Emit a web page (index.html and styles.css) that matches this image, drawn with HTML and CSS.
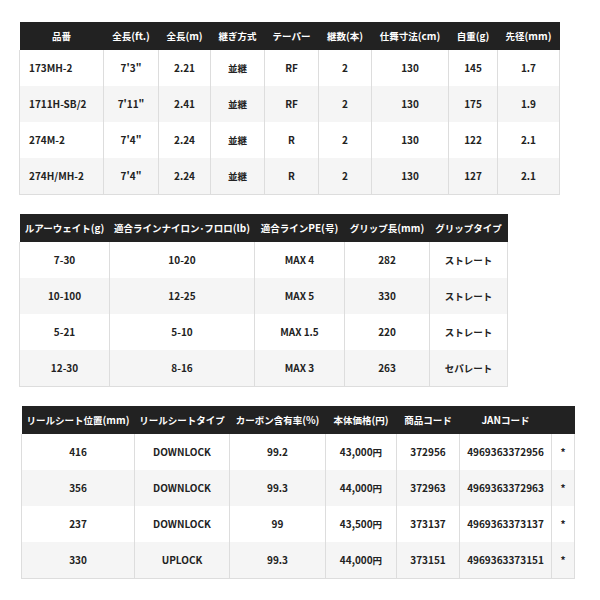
FILE: index.html
```html
<!DOCTYPE html>
<html lang="ja">
<head>
<meta charset="utf-8">
<link rel="stylesheet" href="styles.css">
</head>
<body>
<div class="page">
  <table class="spec t1">
    <colgroup>
      <col style="width:84px"><col style="width:55px"><col style="width:52px"><col style="width:54px"><col style="width:54px"><col style="width:53px"><col style="width:77px"><col style="width:49px"><col style="width:62px">
    </colgroup>
    <thead>
      <tr><th><span class="ja">品番</span></th><th><span class="ja">全長</span>(ft.)</th><th><span class="ja">全長</span>(m)</th><th><span class="ja">継ぎ方式</span></th><th><span class="ja">テーパー</span></th><th><span class="ja">継数</span>(<span class="ja">本</span>)</th><th><span class="ja">仕舞寸法</span>(cm)</th><th><span class="ja">自重</span>(g)</th><th><span class="ja">先径</span>(mm)</th></tr>
    </thead>
    <tbody>
      <tr><td class="left">173MH-2</td><td>7'3"</td><td>2.21</td><td><span class="ja">並継</span></td><td>RF</td><td>2</td><td>130</td><td>145</td><td>1.7</td></tr>
      <tr><td class="left">1711H-SB/2</td><td>7'11"</td><td>2.41</td><td><span class="ja">並継</span></td><td>RF</td><td>2</td><td>130</td><td>175</td><td>1.9</td></tr>
      <tr><td class="left">274M-2</td><td>7'4"</td><td>2.24</td><td><span class="ja">並継</span></td><td>R</td><td>2</td><td>130</td><td>122</td><td>2.1</td></tr>
      <tr><td class="left">274H/MH-2</td><td>7'4"</td><td>2.24</td><td><span class="ja">並継</span></td><td>R</td><td>2</td><td>130</td><td>127</td><td>2.1</td></tr>
    </tbody>
  </table>

  <table class="spec t2">
    <colgroup>
      <col style="width:90px"><col style="width:145px"><col style="width:90px"><col style="width:85px"><col style="width:78px">
    </colgroup>
    <thead>
      <tr><th><span class="ja">ルアーウェイト</span>(g)</th><th><span class="ja">適合ラインナイロン･フロロ</span>(lb)</th><th><span class="ja">適合ライン</span>PE(<span class="ja">号</span>)</th><th><span class="ja">グリップ長</span>(mm)</th><th><span class="ja">グリップタイプ</span></th></tr>
    </thead>
    <tbody>
      <tr><td>7-30</td><td>10-20</td><td>MAX 4</td><td>282</td><td><span class="ja">ストレート</span></td></tr>
      <tr><td>10-100</td><td>12-25</td><td>MAX 5</td><td>330</td><td><span class="ja">ストレート</span></td></tr>
      <tr><td>5-21</td><td>5-10</td><td>MAX 1.5</td><td>220</td><td><span class="ja">ストレート</span></td></tr>
      <tr><td>12-30</td><td>8-16</td><td>MAX 3</td><td>263</td><td><span class="ja">セパレート</span></td></tr>
    </tbody>
  </table>

  <table class="spec t3">
    <colgroup>
      <col style="width:113px"><col style="width:95px"><col style="width:96px"><col style="width:71px"><col style="width:63px"><col style="width:92px"><col style="width:23px">
    </colgroup>
    <thead>
      <tr><th><span class="ja">リールシート位置</span>(mm)</th><th><span class="ja">リールシートタイプ</span></th><th><span class="ja">カーボン含有率</span>(%)</th><th><span class="ja">本体価格</span>(<span class="ja">円</span>)</th><th><span class="ja">商品コード</span></th><th>JAN<span class="ja">コード</span></th><th></th></tr>
    </thead>
    <tbody>
      <tr><td>416</td><td>DOWNLOCK</td><td>99.2</td><td>43,000<span class="ja">円</span></td><td>372956</td><td>4969363372956</td><td class="star">*</td></tr>
      <tr><td>356</td><td>DOWNLOCK</td><td>99.3</td><td>44,000<span class="ja">円</span></td><td>372963</td><td>4969363372963</td><td class="star">*</td></tr>
      <tr><td>237</td><td>DOWNLOCK</td><td>99</td><td>43,500<span class="ja">円</span></td><td>373137</td><td>4969363373137</td><td class="star">*</td></tr>
      <tr><td>330</td><td>UPLOCK</td><td>99.3</td><td>44,000<span class="ja">円</span></td><td>373151</td><td>4969363373151</td><td class="star">*</td></tr>
    </tbody>
  </table>
</div>
</body>
</html>
```

FILE: styles.css
```css
html, body {
  margin: 0;
  padding: 0;
  background: #ffffff;
}

.page {
  display: flex;
  flex-direction: column;
  align-items: flex-start;
  gap: 19px;
  padding: 22px 0 0 19px;
  font-family: "Noto Sans CJK JP", "Noto Sans", sans-serif;
  font-weight: 700;
  font-size: 10px;
  color: #222222;
}

.ja {
  font-size: 9.5px;
}

.spec {
  border-collapse: collapse;
  table-layout: fixed;
  border-bottom: 1px solid #dddddd;
}

.t1 { width: 540px; }
.t2 { width: 488px; }
.t3 { width: 553px; margin-left: 2px; }

.spec th {
  background: #222222;
  color: #ffffff;
  height: 28px;
  padding: 0;
  font-weight: 700;
  text-align: center;
  white-space: nowrap;
  line-height: 1;
}

.spec td {
  height: 36px;
  padding: 0;
  text-align: center;
  white-space: nowrap;
  border-left: 1px solid #dddddd;
  border-right: 1px solid #dddddd;
  background: #ffffff;
  line-height: 1;
}

.spec tbody tr:nth-child(even) td {
  background: #f5f5f5;
}

.spec td.left {
  text-align: left;
  padding-left: 9px;
}

.spec td.star {
  text-align: center;
  vertical-align: middle;
}
```
